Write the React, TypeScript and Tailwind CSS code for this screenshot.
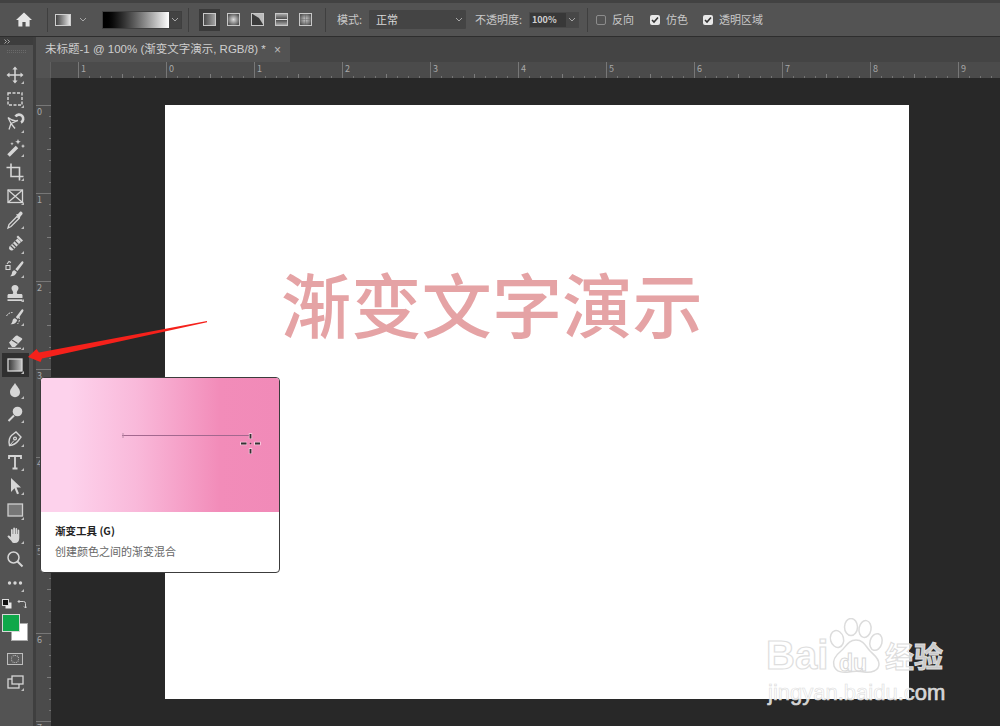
import React from "react";

const Corner = () => (
  <span className="absolute right-[5px] bottom-[3px] h-0 w-0 border-b-[3px] border-l-[3px] border-b-[#bdbdbd] border-l-transparent" />
);

function Tool({ d, flag = true, active = false, children }: { d?: string; flag?: boolean; active?: boolean; children?: React.ReactNode }) {
  return (
    <div className={"relative flex h-[24.2px] w-[27px] ml-[2px] items-center justify-center text-[#d6d6d6] " + (active ? "bg-[#303030]" : "")}>
      <svg width="24" height="24" viewBox="0 0 24 24" fill="none" stroke="currentColor" strokeWidth="1.3" className="-translate-x-[1px]">
        {d && <path d={d} />}
        {children}
      </svg>
      {flag && <Corner />}
    </div>
  );
}

const F = ({ d }: { d: string }) => <path d={d} fill="currentColor" stroke="none" />;

function Chevron({ className = "" }: { className?: string }) {
  return (
    <svg width="8" height="5" viewBox="0 0 8 5" fill="none" stroke="#a8a8a8" strokeWidth="1" className={className}>
      <path d="M1 1l3 3 3-3" />
    </svg>
  );
}

function Sep() {
  return <div className="h-[24px] w-px bg-[#3f3f3f] shrink-0" />;
}

function Check({ on, label, w }: { on: boolean; label: string; w: string }) {
  return (
    <div className={"flex items-center gap-[6px] shrink-0 " + w}>
      {on ? (
        <div className="flex h-[10px] w-[10px] items-center justify-center rounded-[2px] bg-[#e8e8e8]">
          <svg width="8" height="8" viewBox="0 0 8 8" fill="none" stroke="#333" strokeWidth="1.6">
            <path d="M1 4l2 2 4-4.5" />
          </svg>
        </div>
      ) : (
        <div className="h-[10px] w-[10px] rounded-[2px] border border-[#8c8c8c]" />
      )}
      <span>{label}</span>
    </div>
  );
}

function Mode({ active, children }: { active?: boolean; children: React.ReactNode }) {
  return (
    <div className={"flex h-[22px] w-[21px] mr-[3px] items-center justify-center " + (active ? "bg-[#3a3a3a]" : "")}>
      <svg width="13" height="13" viewBox="0 0 13 13">
        {children}
        <rect x="0.5" y="0.5" width="12" height="12" fill="none" stroke="#c8c8c8" />
      </svg>
    </div>
  );
}

function OptionsBar() {
  return (
    <div className="flex h-[33px] shrink-0 items-center bg-[#535353] text-[11px] text-[#c8c8c8]">
      <div className="flex w-[47px] shrink-0 justify-center pl-[1px]">
        <svg width="16" height="15" viewBox="0 0 16 15" fill="#e6e6e6">
          <path d="M8 0.5L0 8h2.4v6.5h4V10h3.2v4.5h4V8H16z" />
        </svg>
      </div>
      <Sep />
      <div className="ml-[7px] h-[12px] w-[16px] shrink-0 border border-[#cfcfcf] bg-gradient-to-r from-[#444] to-[#e8e8e8]" />
      <Chevron className="ml-[8px] shrink-0" />
      <div className="ml-[15px] flex h-[18px] w-[80px] shrink-0 border border-[#3f3f3f]">
        <div className="w-[66px] bg-gradient-to-r from-black to-white" />
        <div className="flex flex-1 items-center justify-center bg-[#434343]">
          <Chevron />
        </div>
      </div>
      <div className="ml-[6px]"><Sep /></div>
      <div className="ml-[10px] flex w-[126px] shrink-0">
        <Mode active><defs><linearGradient id="m1"><stop offset="0" stopColor="#444" /><stop offset="1" stopColor="#aaa" /></linearGradient></defs><rect width="13" height="13" fill="url(#m1)" /></Mode>
        <Mode><defs><radialGradient id="m2"><stop offset="0" stopColor="#ddd" /><stop offset="1" stopColor="#555" /></radialGradient></defs><rect width="13" height="13" fill="url(#m2)" /></Mode>
        <Mode><rect width="13" height="13" fill="#bbb" /><path d="M0 0l8 5 5 8H0z" fill="#3a3a3a" /></Mode>
        <Mode><defs><linearGradient id="m4" x2="0" y2="1"><stop offset="0" stopColor="#bbb" /><stop offset="0.5" stopColor="#444" /><stop offset="1" stopColor="#bbb" /></linearGradient></defs><rect width="13" height="13" fill="url(#m4)" /><path d="M0 6.500h13" stroke="#ddd" /></Mode>
        <Mode><defs><radialGradient id="m5"><stop offset="0" stopColor="#ccc" /><stop offset="1" stopColor="#555" /></radialGradient></defs><rect width="13" height="13" fill="url(#m5)" /><path d="M6.500 0v13M0 6.500h13" stroke="#666" strokeWidth="0.500" /></Mode>
      </div>
      <Sep />
      <span className="ml-[11px] w-[32px] shrink-0">模式:</span>
      <div className="flex h-[19px] w-[97px] shrink-0 items-center justify-between rounded-[1px] bg-[#444444] pl-[7px] pr-[3px] text-[#d8d8d8]">
        <span>正常</span>
        <Chevron />
      </div>
      <span className="ml-[9px] w-[54px] shrink-0">不透明度:</span>
      <div className="flex h-[16px] w-[50px] shrink-0 border border-[#484848]">
        <div className="flex w-[36px] items-center bg-[#383838] pl-[2px] text-[9px] font-bold leading-none text-[#d0d0d0]">100%</div>
        <div className="flex flex-1 items-center justify-center bg-[#474747]"><Chevron /></div>
      </div>
      <div className="ml-[8px]"><Sep /></div>
      <div className="ml-[8px] flex">
        <Check on={false} label="反向" w="w-[54px]" />
        <Check on label="仿色" w="w-[53px]" />
        <Check on label="透明区域" w="w-[70px]" />
      </div>
    </div>
  );
}

function Toolbar() {
  return (
    <div className="flex w-[33px] shrink-0 flex-col bg-[#535353]">
      <div className="flex h-[8px] items-center bg-[#3d3d3d] pl-[4px] text-[7px] leading-none text-[#bbb]">
        <svg width="6" height="5" viewBox="0 0 6 5" fill="none" stroke="#c4c4c4" strokeWidth="0.8"><path d="M0.5 0.5l2 2-2 2M3.500 0.5l2 2-2 2" /></svg>
      </div>
      <div className="mx-[7px] mt-[5px] mb-[10px] h-[3px] border-y border-dotted border-[#6a6a6a]" />
      {/* tools */}
      <Tool>
        <path d="M12 5v14M5 12h14" strokeWidth="1.5" />
        <F d="M12 3.500l2.600 3h-5.200zM12 20.500l2.600-3H9.400zM3.500 12l3-2.600v5.200zM20.500 12l-3-2.600v5.200z" />
      </Tool>
      <Tool><rect x="5" y="6" width="14" height="12" strokeDasharray="3 1.500" strokeWidth="1.400" /></Tool>
      <Tool>
        <path d="M5 6.500c3 2.500 6 4 10 3M5 6.500l3 6-2 6M8 12.500l4 5M8 12.500l7-3" strokeWidth="1.300" />
        <path d="M12.500 5.500a4.200 4.200 0 1 1 5.500 6" strokeWidth="2.600" />
      </Tool>
      <Tool>
        <path d="M5.500 19.500L14 11" strokeWidth="3.600" />
        <F d="M15 3l.8 2 2 .8-2 .8-.8 2-.8-2-2-.8 2-.8zM20 8l.6 1.500 1.400.6-1.400.6-.6 1.500-.6-1.500L18 10.100l1.400-.6zM9 6l.5 1.200 1.200.5-1.200.5L9 9.400l-.5-1.200-1.200-.5 1.200-.5z" />
      </Tool>
      <Tool><path d="M8 3.500V16.500h12.500M3.500 7.500H16.500V20.500" strokeWidth="1.600" /></Tool>
      <Tool><rect x="5" y="6" width="14.500" height="12.500" /><path d="M5 6l14.500 12.500M19.500 6L5 18.500" /></Tool>
      <Tool>
        <path d="M5 20l1-3.500L14 8.500l2 2-8 8z" />
        <F d="M13 6.500l2-.5 2-2.200c1.200-1 3.400 1.200 2.400 2.400L17.300 8.800l-.6 2.200z" />
      </Tool>
      <Tool>
        <path d="M6.500 14.500l8-8 3.500 3.500-8 8a2.500 2.500 0 0 1-3.500-3.500z" fill="currentColor" stroke="none" />
        <path d="M9.500 11.500l3.500 3.500M12 9l3.500 3.500M7.500 13.500l3.500 3.500" stroke="#535353" strokeWidth="1.200" />
        <path d="M13.500 5l1.500-1.500 5 5L18.500 10z" fill="currentColor" stroke="none" />
      </Tool>
      <Tool>
        <F d="M20 4.500c.8.500.6 1.400 0 2.200l-5.500 7.300-2.200-1.700 6-7.400c.5-.6 1.200-.8 1.700-.4z" />
        <F d="M11.500 13.300l2.300 1.700c-.8 3-3.500 4.500-6.800 4.200 1.500-1 1.800-2.200 2-3.500.2-1.300 1.200-2.300 2.500-2.400z" />
        <path d="M3 8.500h4v4H3zM4 7l2-2.500 2 1" strokeWidth="1.100" />
      </Tool>
      <Tool>
        <F d="M12 4c2.200 0 3.500 1.500 3.500 3.300 0 1.800-1.700 2.900-1.700 4.400 0 .6.300 1 .7 1.300h3.500c1 0 1.500.6 1.500 1.500V17H4.500v-2.500c0-.9.600-1.500 1.500-1.500h3.500c.4-.3.700-.7.700-1.300 0-1.500-1.700-2.600-1.700-4.400C8.500 5.500 9.800 4 12 4z" />
        <F d="M4.500 18.300h15V20h-15z" />
      </Tool>
      <Tool>
        <F d="M20 4.500c.8.500.6 1.400 0 2.200l-5 7.300-2.200-1.700 5.500-7.400c.5-.6 1.200-.8 1.700-.4z" />
        <F d="M12 13.300l2.300 1.700c-.8 3-3.500 4.500-6.800 4.200 1.500-1 1.800-2.200 2-3.500.2-1.300 1.200-2.300 2.500-2.400z" />
        <path d="M3.500 11c1-2 3-3.500 6-3.500M16 12c1 2 .5 5-1.500 7" strokeWidth="1" strokeDasharray="2 1" />
      </Tool>
      <Tool>
        <F d="M6 13.500l6-6c1-1 2-1.200 3-.6l3.500 2c1 .6 1 1.400.2 2.200L12 18H9z" />
        <path d="M9 11l5.500 3.500" stroke="#535353" strokeWidth="1.200" />
        <path d="M5 19.300h13" strokeWidth="1.200" />
      </Tool>
      <Tool active>
        <defs><linearGradient id="tg"><stop offset="0" stopColor="#333" /><stop offset="1" stopColor="#c4c4c4" /></linearGradient></defs>
        <rect x="5" y="6" width="14" height="12" fill="url(#tg)" stroke="#d8d8d8" />
      </Tool>
      <Tool><F d="M12 5c2 3.500 5 5.800 5 9.300a5 5 0 0 1-10 0C7 10.800 10 8.500 12 5z" /></Tool>
      <Tool>
        <circle cx="14.500" cy="9.500" r="4.800" fill="currentColor" stroke="none" />
        <path d="M11 13.500L5.500 19" strokeWidth="2" />
      </Tool>
      <Tool>
        <path d="M6.500 19.500c-1.500-5 .5-9 2.500-10.500l4-3 5 5-3 4c-1.500 2-5 4-8.500 4.500z" strokeWidth="1.400" />
        <path d="M6.500 19.500l4.500-5" strokeWidth="1" />
        <circle cx="12" cy="12.500" r="1.400" />
      </Tool>
      <Tool flag={true}>
        <path d="M6 9V6h12v3M12 6v12.500M9.500 18.500h5" strokeWidth="1.800" />
      </Tool>
      <Tool><F d="M8 4l10 9.500h-4.500l2.500 6-2 .8-2.500-6L8 18z" /></Tool>
      <Tool><rect x="5" y="6" width="14.500" height="12" fill="#777777" stroke="#cfcfcf" /></Tool>
      <Tool>
        <F d="M9 18.500c-1.500-1.500-3-3-4.200-4.500-.8-1 .6-2 1.600-1.200L8 14V7c0-1.200 1.700-1.200 1.700 0v4h.5V5.500c0-1.200 1.800-1.200 1.800 0V11h.5V6c0-1.200 1.700-1.200 1.700 0v5h.5V7.500c0-1.200 1.600-1.200 1.600 0V15c0 3-1.500 5-4.500 5-1.500 0-2.500-.5-3.300-1.500z" />
      </Tool>
      <Tool flag={false}>
        <circle cx="10.500" cy="10.500" r="5.500" strokeWidth="1.500" />
        <path d="M14.500 14.500l5 5" strokeWidth="2" />
      </Tool>
      <Tool>
        <circle cx="6.500" cy="12" r="1.700" fill="currentColor" stroke="none" />
        <circle cx="12" cy="12" r="1.700" fill="currentColor" stroke="none" />
        <circle cx="17.500" cy="12" r="1.700" fill="currentColor" stroke="none" />
      </Tool>
      {/* colours */}
      <div className="mt-[3px] flex h-[12px] items-center justify-between pl-[2px] pr-[6px]">
        <svg width="10" height="10" viewBox="0 0 10 10">
          <rect x="3.500" y="3.500" width="6" height="6" fill="#e8e8e8" />
          <rect x="0.500" y="0.500" width="6" height="6" fill="#111" stroke="#ddd" />
        </svg>
        <svg width="10" height="10" viewBox="0 0 10 10" fill="none" stroke="#d0d0d0" strokeWidth="1">
          <path d="M1 2.500h5.500a2 2 0 0 1 2 2V9M2.500 1L1 2.500 2.500 4M7 7.500L8.500 9 10 7.500" />
        </svg>
      </div>
      <div className="relative z-10 ml-[2px] mt-[4px] h-[18px] w-[18px] border border-[#d8d8d8] bg-[#0fa84a]" />
      <div className="-mt-[9px] ml-[11px] h-[18px] w-[17px] border border-[#aaa] bg-white" />
      <div className="ml-[7px] mt-[12px] flex h-[12px] w-[16px] items-center justify-center border border-[#bdbdbd] bg-[#5c5c5c]">
        <div className="h-[8px] w-[8px] rounded-full border border-dotted border-[#c8c8c8]" />
      </div>
      <div className="mt-[5px]">
        <Tool>
          <rect x="5" y="9" width="11" height="9" />
          <rect x="9" y="6" width="11" height="8" fill="#535353" />
        </Tool>
      </div>
    </div>
  );
}

function HRuler() {
  const labels = [1, 0, 1, 2, 3, 4, 5, 6, 7, 8, 9];
  return (
    <div className="flex h-[16px] shrink-0 overflow-hidden bg-[#4b4b4b]">
      <div className="h-full w-[15px] shrink-0 border-r border-[#5f5f5f] bg-[#535353]" />
      <div className="h-full w-[27px] shrink-0" />
      {labels.map((n, i) => (
        <div
          key={i}
          className="h-full w-[88px] shrink-0 border-l border-[#777] bg-[linear-gradient(#7c7c7c,#7c7c7c),repeating-linear-gradient(90deg,#747474_0,#747474_1px,transparent_1px,transparent_11px)] bg-[length:1px_4px,100%_2px] bg-[position:43px_100%,10px_100%] bg-no-repeat pl-[2px] text-[9px] leading-[13px] text-[#a8a8a8]"
        >
          {n}
        </div>
      ))}
    </div>
  );
}

function VRuler() {
  const labels = [0, 1, 2, 3, 4, 5, 6, 7];
  return (
    <div className="flex w-[15px] shrink-0 flex-col overflow-hidden bg-[#4b4b4b]">
      <div className="h-[27px] w-full shrink-0" />
      {labels.map((n) => (
        <div
          key={n}
          className="h-[88px] w-full shrink-0 border-t border-[#777] bg-[linear-gradient(#7c7c7c,#7c7c7c),repeating-linear-gradient(180deg,#747474_0,#747474_1px,transparent_1px,transparent_11px)] bg-[length:4px_1px,2px_100%] bg-[position:100%_43px,100%_10px] bg-no-repeat pl-[1px] text-[9px] leading-[11px] text-[#a8a8a8]"
        >
          {n}
        </div>
      ))}
    </div>
  );
}

function Tooltip() {
  return (
    <div className="absolute left-[40px] top-[377px] z-20 w-[240px] overflow-hidden rounded-[4px] border border-[#3c3c3c] bg-white">
      <div className="relative h-[134px] bg-[linear-gradient(90deg,#fdd2ec_12%,#f9b9da_40%,#f28cb9_75%,#f18ab8_100%)]">
        <svg width="238" height="134" viewBox="0 0 238 134" className="absolute inset-0">
          <path d="M81 57.500h127" stroke="#a3688f" strokeWidth="1" />
          <path d="M82 55v5" stroke="#b98aa6" strokeWidth="1" />
          <path d="M209.500 55v6M209.500 70v6M199 65.500h7M213 65.500h7" stroke="#ffffff" strokeWidth="3.400" opacity="0.5" />
          <path d="M209.500 56v4.500M209.500 71v4.500M200 65.500h5.500M214 65.500h5" stroke="#333333" strokeWidth="1.800" />
          <circle cx="209.500" cy="65.500" r="0.800" fill="#444" />
        </svg>
      </div>
      <div className="h-[60px] px-[14px] pt-[11px]">
        <div className="text-[10.500px] font-bold leading-[16px] text-[#222]">渐变工具 (G)</div>
        <div className="mt-[4px] text-[11px] leading-[16px] text-[#666]">创建颜色之间的渐变混合</div>
      </div>
    </div>
  );
}

function Arrow() {
  return (
    <svg width="210" height="50" viewBox="0 0 210 50" className="absolute left-0 top-[316px] z-30">
      <path d="M28 41L36.500 33 39 36.500 207 5 207 6.200 42 42.500 40.500 46z" fill="#f5211b" />
    </svg>
  );
}

function Watermark() {
  return (
    <div className="absolute left-[766px] top-[618px] z-10 w-[182px] font-['Liberation_Sans','Noto_Sans_CJK_SC',sans-serif]">
      <div className="flex h-[60px] items-end">
        <span className="w-[62px] text-[40px] font-bold leading-[46px] text-white/80 [-webkit-text-stroke:1.2px_#dedede]">Bai</span>
        <div className="relative h-[60px] w-[56px] shrink-0">
          <svg width="56" height="60" viewBox="0 0 56 60" fill="#ffffff" fillOpacity="0.8" stroke="#dcdcdc" strokeWidth="1.500" className="absolute inset-0">
            <ellipse cx="9" cy="21" rx="6.500" ry="8.500" transform="rotate(-15 9 21)" />
            <ellipse cx="23" cy="9" rx="6.500" ry="8.500" />
            <ellipse cx="37" cy="11" rx="6" ry="8.500" transform="rotate(10 37 11)" />
            <ellipse cx="48" cy="24" rx="6" ry="8.500" transform="rotate(15 48 24)" />
            <path d="M28 22c-8 0-10 7-15 11-5 4-9 9-7 15 2 6 9 7 15 6 5-1 10-1 15 0 7 1 15-1 15-8 0-6-5-9-9-13-4-4-6-11-14-11z" />
          </svg>
          <span className="absolute bottom-[3px] left-[11px] text-[23px] font-bold leading-[24px] text-white/80 [-webkit-text-stroke:1px_#d8d8d8]">du</span>
        </div>
        <span className="pl-[1px] text-[29px] font-bold leading-[40px] text-white/75 [-webkit-text-stroke:1px_#dcdcdc]">经验</span>
      </div>
      <div className="mt-[3px] pl-[2px] text-[22px] leading-[24px] text-white/80 [-webkit-text-stroke:0.6px_#dcdcdc]">jingyan.baidu.com</div>
    </div>
  );
}

export default function App() {
  return (
    <div className="relative flex h-[726px] w-[1000px] flex-col overflow-hidden bg-[#282828] font-['Noto_Sans_CJK_SC','Liberation_Sans',sans-serif]">
      <div className="h-[3px] shrink-0 bg-[#424242]" />
      <OptionsBar />
      <div className="h-px shrink-0 bg-[#2e2e2e]" />
      <div className="flex min-h-0 flex-1">
        <Toolbar />
        <div className="w-[3px] shrink-0 bg-[#3f3f3f]" />
        <div className="flex min-w-0 flex-1 flex-col">
          <div className="flex h-[25px] shrink-0 bg-[#444444]">
            <div className="flex w-[254px] items-center bg-[#535353] pl-[9px] font-['Liberation_Sans','Noto_Sans_CJK_SC',sans-serif] text-[11.500px] text-[#cfcfcf]">
              <span className="w-[229px] whitespace-nowrap">未标题-1 @ 100% (渐变文字演示, RGB/8) *</span>
              <span className="text-[12px] leading-none text-[#bbb]">×</span>
            </div>
          </div>
          <HRuler />
          <div className="flex min-h-0 flex-1">
            <VRuler />
            <div className="min-w-0 flex-1 pl-[114px] pt-[27px]">
              <div className="h-[594px] w-[744px] bg-white pl-[116px] pt-[155px]">
                <div className="whitespace-nowrap text-[70.300px] font-medium leading-[84px] text-[#e5a3a5]">渐变文字演示</div>
              </div>
            </div>
          </div>
        </div>
      </div>
      <Arrow />
      <Tooltip />
      <Watermark />
    </div>
  );
}
